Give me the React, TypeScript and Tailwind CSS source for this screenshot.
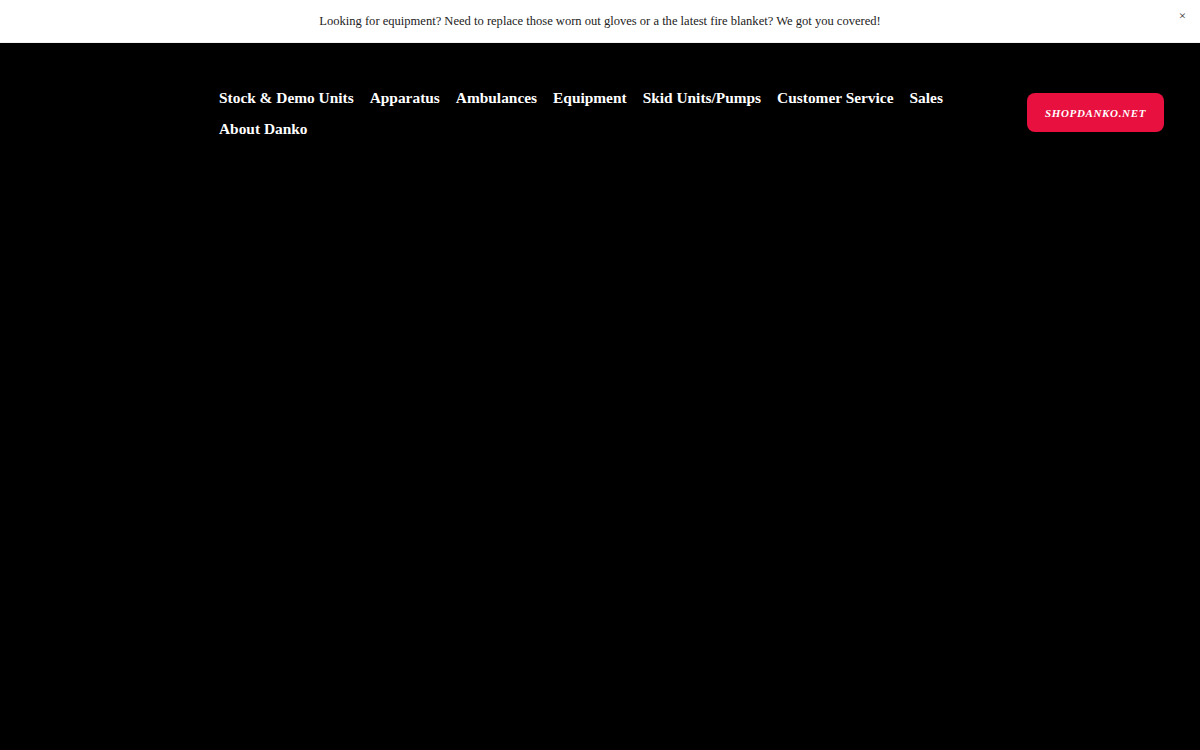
import React from "react";

const navItems = [
  "Stock & Demo Units",
  "Apparatus",
  "Ambulances",
  "Equipment",
  "Skid Units/Pumps",
  "Customer Service",
  "Sales",
  "About Danko",
];

export default function App() {
  return (
    <div
      className="min-h-[750px] w-full bg-black"
      style={{ fontFamily: '"Liberation Serif", "Times New Roman", serif' }}
    >
      {/* announcement bar */}
      <div className="relative flex h-[43px] items-center justify-center border-b border-[#f2f2f2] bg-white">
        <p className="text-[12.55px] text-[#222]">
          Looking for equipment? Need to replace those worn out gloves or a the latest fire blanket? We got you covered!
        </p>
        <button className="absolute right-[14px] top-[9px] text-[13px] leading-none text-[#333]">×</button>
      </div>

      {/* header */}
      <header className="flex items-start justify-between pl-[219px] pr-[36px] pt-[44px]">
        <nav className="flex w-[760px] flex-wrap gap-x-[16px] gap-y-[10px]">
          {navItems.map((item) => (
            <a key={item} className="text-[15.4px] font-bold leading-[21px] text-white">
              {item}
            </a>
          ))}
        </nav>
        <a className="mt-[6px] flex h-[39px] w-[137px] items-center justify-center rounded-[8px] bg-[#e8103f] pt-[2px] text-[11px] font-bold italic tracking-[0.06em] text-white">
          SHOPDANKO.NET
        </a>
      </header>
    </div>
  );
}
